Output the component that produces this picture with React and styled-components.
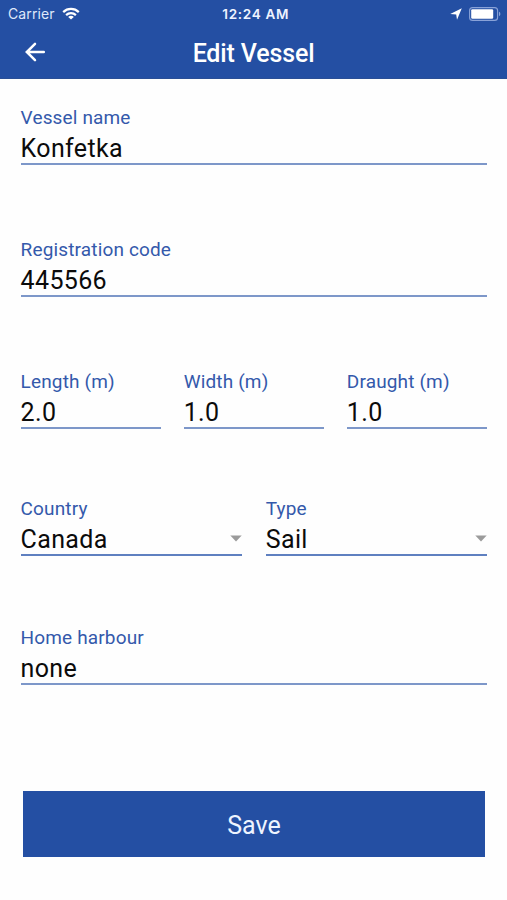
import React from "react";
import styled, { createGlobalStyle } from "styled-components";

const BLUE = "#244fa3";

const GlobalStyle = createGlobalStyle`
  * { box-sizing: border-box; }
  body { margin: 0; background: #fff; }
`;

const Screen = styled.div`
  width: 507px;
  height: 900px;
  overflow: hidden;
  background: #fefefe;
  font-family: Roboto, sans-serif;
`;

const Header = styled.header`
  height: 79px;
  background: ${BLUE};
  border-bottom: 1px solid #2a4f96;
  color: #fff;
`;

const StatusBar = styled.div`
  display: grid;
  grid-template-columns: 1fr auto 1fr;
  align-items: center;
  height: 27px;
  padding: 0 6px 0 8px;
  font-family: Inter, sans-serif;
  font-size: 14px;
  line-height: 27px;
`;

const Carrier = styled.div`
  display: flex;
  align-items: center;
  gap: 7px;
  color: #dfe8fa;
  letter-spacing: 0.1px;
`;

const Clock = styled.div`
  padding: 1px 0 0 2.5px;
  font-weight: 600;
  font-size: 13.5px;
  line-height: 26px;
  letter-spacing: 0.7px;
  color: #eef3ff;
`;

const Indicators = styled.div`
  display: flex;
  align-items: center;
  justify-content: flex-end;
  gap: 7px;
`;

const TitleBar = styled.div`
  display: grid;
  grid-template-columns: 48px 1fr 48px;
  align-items: center;
  height: 51px;
  padding: 0 0 1px;
`;

const BackButton = styled.button`
  display: flex;
  justify-content: flex-end;
  padding: 0 2px 0 0;
  border: 0;
  background: none;
  color: #fff;
`;

const Title = styled.h1`
  margin: 0;
  padding-top: 4px;
  font-size: 25px;
  font-weight: 500;
  line-height: 46px;
  letter-spacing: -0.15px;
  text-align: center;
`;

const Form = styled.form`
  padding: 26px 20px 0 20.6px;
`;

const Row = styled.div`
  display: grid;
  grid-template-columns: repeat(${(p) => p.$columns}, 1fr);
  column-gap: ${(p) => p.$gap || 0}px;
  height: 60px;
  margin-bottom: ${(p) => p.$after}px;
`;

const FieldBox = styled.label`
  display: flex;
  flex-direction: column;
  min-width: 0;
  border-bottom: 2px solid ${(p) => (p.$strong ? "#5f80c0" : "#7d97c9")};
`;

const Label = styled.span`
  font-size: 19px;
  line-height: 25px;
  letter-spacing: 0.15px;
  color: #3459ab;
`;

const ValueLine = styled.span`
  display: flex;
  align-items: center;
  justify-content: space-between;
  height: 33px;
  padding-top: 1px;
`;

const Value = styled.span`
  padding-top: 4px;
  font-size: 25px;
  line-height: 32px;
  letter-spacing: 0.35px;
  color: #0b0b0b;
`;

const SaveButton = styled.button`
  display: block;
  width: 462px;
  height: 66px;
  margin: 0 0 0 2.4px;
  padding: 3px 0 0;
  border: 0;
  background: ${BLUE};
  color: #eef4ff;
  font-family: inherit;
  font-size: 25px;
  line-height: 63px;
  letter-spacing: 0;
`;

const WifiIcon = () => (
  <svg width="18" height="13" viewBox="0 0 18 13" fill="none" stroke="#fff" strokeWidth="2.2">
    <path d="M1.2 5.1C5.6 0.9 12.4 0.9 16.8 5.1" />
    <path d="M4.1 8.1C6.9 5.5 11.1 5.5 13.9 8.1" />
    <path d="M9 12.5L6.2 9.9C7.8 8.5 10.2 8.5 11.8 9.9Z" fill="#fff" stroke="none" />
  </svg>
);

const LocationIcon = () => (
  <svg width="12" height="12" viewBox="0 0 12 12" fill="#fff">
    <path d="M11.8 0.2L7 11.8L6.2 6.5L0.2 5.9Z" />
  </svg>
);

const BatteryIcon = () => (
  <svg width="32" height="14" viewBox="0 0 32 14">
    <rect x="0.6" y="0.6" width="28" height="12.8" rx="3" fill="none" stroke="#89a2d8" strokeWidth="1.1" />
    <rect x="2.2" y="2.2" width="22" height="9.6" rx="1.2" fill="#fff" />
    <path d="M30 4.8C31.8 5.4 31.8 8.6 30 9.2Z" fill="#89a2d8" />
  </svg>
);

const BackIcon = () => (
  <svg width="22" height="22" viewBox="0 0 22 22" fill="none" stroke="currentColor" strokeWidth="2.5" strokeLinecap="round">
    <path d="M11 2.8L2.8 11L11 19.2M3.2 11H19.8" />
  </svg>
);

const CaretIcon = () => (
  <svg width="12" height="7" viewBox="0 0 12 7" fill="#9b9b9b">
    <path d="M0.3 0.5H11.7L6 6.5Z" />
  </svg>
);

const Field = ({ label, value, select }) => (
  <FieldBox $strong={select}>
    <Label>{label}</Label>
    <ValueLine>
      <Value>{value}</Value>
      {select && <CaretIcon />}
    </ValueLine>
  </FieldBox>
);

export default function App() {
  return (
    <Screen>
      <GlobalStyle />
      <Header>
        <StatusBar>
          <Carrier>
            Carrier
            <WifiIcon />
          </Carrier>
          <Clock>12:24 AM</Clock>
          <Indicators>
            <LocationIcon />
            <BatteryIcon />
          </Indicators>
        </StatusBar>
        <TitleBar>
          <BackButton type="button" aria-label="Back">
            <BackIcon />
          </BackButton>
          <Title>Edit Vessel</Title>
        </TitleBar>
      </Header>
      <Form>
        <Row $columns={1} $after={72}>
          <Field label="Vessel name" value="Konfetka" />
        </Row>
        <Row $columns={1} $after={72}>
          <Field label="Registration code" value="445566" />
        </Row>
        <Row $columns={3} $gap={23} $after={67}>
          <Field label="Length (m)" value="2.0" />
          <Field label="Width (m)" value="1.0" />
          <Field label="Draught (m)" value="1.0" />
        </Row>
        <Row $columns={2} $gap={24} $after={69}>
          <Field label="Country" value="Canada" select />
          <Field label="Type" value="Sail" select />
        </Row>
        <Row $columns={1} $after={106}>
          <Field label="Home harbour" value="none" />
        </Row>
        <SaveButton type="button">Save</SaveButton>
      </Form>
    </Screen>
  );
}
